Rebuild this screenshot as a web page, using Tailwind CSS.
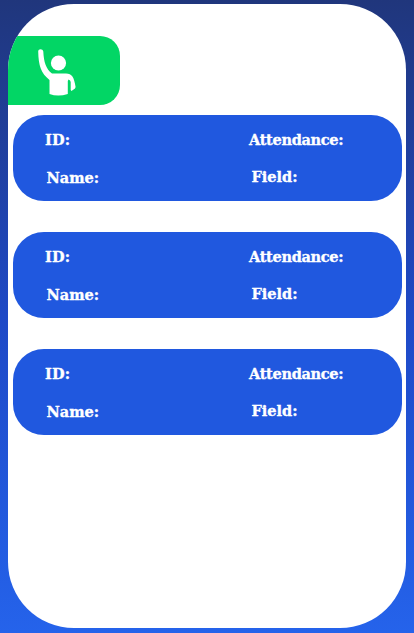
<!DOCTYPE html>
<html lang="en">
<head>
<meta charset="utf-8">
<meta name="viewport" content="width=device-width, initial-scale=1">
<title>Attendance</title>
<script src="https://cdn.jsdelivr.net/npm/@tailwindcss/browser@4"></script>
</head>
<body class="h-[633px] w-[414px] overflow-hidden bg-linear-to-b from-[#20367c] via-[#1e49c6] to-[#2563eb] px-2 pt-1 pb-[5px]">
<main class="h-[624px] overflow-hidden rounded-[66px] bg-white pt-8 font-['DejaVu_Serif',serif] text-[14.5px] leading-5 font-bold text-white [-webkit-text-stroke:0.35px_white]">
  <div class="h-[69px] w-28 rounded-r-[20px] bg-[#02d665]">
    <svg class="h-full w-full" viewBox="0 0 112 69" fill="none">
      <path d="M30.200 15.500C30.200 12.500 34.800 12.500 35.300 15.500C35.800 26 38 33 44 37.500H58C64 37.500 66 41 67.600 51L67 52.500L63.500 55L62.700 54V46Q62.500 44 60.500 43.500L59.800 45V58Q50 61 41.500 58V44C33 37 30.500 30 30.200 15.500Z" fill="white"/>
      <circle cx="50.5" cy="27" r="7.6" fill="white"/>
    </svg>
  </div>
  <div class="mt-2.5 mr-1 ml-[5px] flex flex-col gap-[31px]">
    <section class="grid h-[86px] grid-cols-[204px_1fr] grid-rows-[37px_20px] rounded-[31px] bg-[#2058df] pt-[15px] pl-8">
      <span class="tracking-[0.2px]">ID:</span><span class="tracking-[-0.3px]">Attendance:</span>
      <span class="pt-px pl-[1.5px]">Name:</span><span class="pl-[2.5px]">Field:</span>
    </section>
    <section class="grid h-[86px] grid-cols-[204px_1fr] grid-rows-[37px_20px] rounded-[31px] bg-[#2058df] pt-[15px] pl-8">
      <span class="tracking-[0.2px]">ID:</span><span class="tracking-[-0.3px]">Attendance:</span>
      <span class="pt-px pl-[1.5px]">Name:</span><span class="pl-[2.5px]">Field:</span>
    </section>
    <section class="grid h-[86px] grid-cols-[204px_1fr] grid-rows-[37px_20px] rounded-[31px] bg-[#2058df] pt-[15px] pl-8">
      <span class="tracking-[0.2px]">ID:</span><span class="tracking-[-0.3px]">Attendance:</span>
      <span class="pt-px pl-[1.5px]">Name:</span><span class="pl-[2.5px]">Field:</span>
    </section>
  </div>
</main>
</body>
</html>
